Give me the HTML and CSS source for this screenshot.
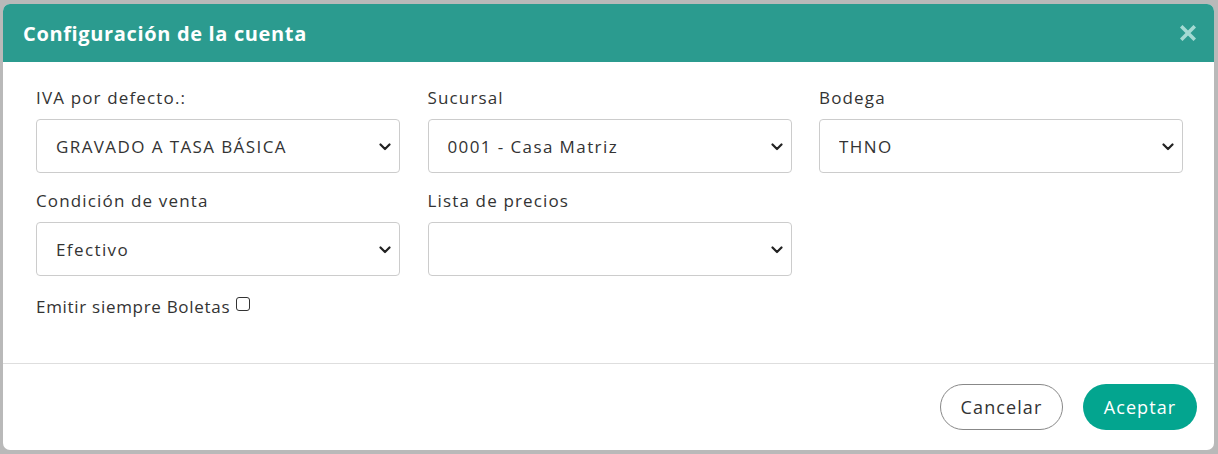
FILE: index.html
```html
<!DOCTYPE html>
<html lang="es">
<head>
<meta charset="utf-8">
<title>Configuración de la cuenta</title>
<link rel="stylesheet" href="styles.css">
</head>
<body>
<div class="backdrop">
  <div class="modal">
    <div class="modal-header">
      <h1 class="modal-title">Configuración de la cuenta</h1>
      <svg class="close" viewBox="0 0 16 16" width="16" height="16"><path d="M2.5 2.5 L13.5 13.5 M13.5 2.5 L2.5 13.5" stroke="#a4dad3" stroke-width="3.6" stroke-linecap="square"/></svg>
    </div>
    <div class="modal-body">
      <div class="grid">
        <div class="field">
          <label class="label">IVA por defecto.:</label>
          <div class="select-wrap">
            <select class="select"><option>GRAVADO A TASA BÁSICA</option></select>
            <svg class="chev" viewBox="0 0 12 8" width="12" height="8"><path d="M1.5 1.5 L6 6 L10.5 1.5" fill="none" stroke="#222" stroke-width="2.2" stroke-linecap="round" stroke-linejoin="round"/></svg>
          </div>
        </div>
        <div class="field">
          <label class="label">Sucursal</label>
          <div class="select-wrap">
            <select class="select"><option>0001 - Casa Matriz</option></select>
            <svg class="chev" viewBox="0 0 12 8" width="12" height="8"><path d="M1.5 1.5 L6 6 L10.5 1.5" fill="none" stroke="#222" stroke-width="2.2" stroke-linecap="round" stroke-linejoin="round"/></svg>
          </div>
        </div>
        <div class="field">
          <label class="label">Bodega</label>
          <div class="select-wrap">
            <select class="select"><option>THNO</option></select>
            <svg class="chev" viewBox="0 0 12 8" width="12" height="8"><path d="M1.5 1.5 L6 6 L10.5 1.5" fill="none" stroke="#222" stroke-width="2.2" stroke-linecap="round" stroke-linejoin="round"/></svg>
          </div>
        </div>
        <div class="field">
          <label class="label">Condición de venta</label>
          <div class="select-wrap">
            <select class="select"><option>Efectivo</option></select>
            <svg class="chev" viewBox="0 0 12 8" width="12" height="8"><path d="M1.5 1.5 L6 6 L10.5 1.5" fill="none" stroke="#222" stroke-width="2.2" stroke-linecap="round" stroke-linejoin="round"/></svg>
          </div>
        </div>
        <div class="field">
          <label class="label">Lista de precios</label>
          <div class="select-wrap">
            <select class="select"><option></option></select>
            <svg class="chev" viewBox="0 0 12 8" width="12" height="8"><path d="M1.5 1.5 L6 6 L10.5 1.5" fill="none" stroke="#222" stroke-width="2.2" stroke-linecap="round" stroke-linejoin="round"/></svg>
          </div>
        </div>
      </div>
      <div class="check-row">
        <span class="label-inline">Emitir siempre Boletas</span>
        <input type="checkbox" class="checkbox">
      </div>
    </div>
    <div class="modal-footer">
      <button class="btn btn-outline">Cancelar</button>
      <button class="btn btn-primary">Aceptar</button>
    </div>
  </div>
</div>
</body>
</html>
```
FILE: styles.css
```css
* { box-sizing: border-box; }
html, body { margin: 0; padding: 0; }
body {
  width: 1218px;
  height: 454px;
  background: #b9b9b9;
  font-family: "Open Sans", "Liberation Sans", sans-serif;
  color: #333;
  overflow: hidden;
}
.backdrop {
  padding: 4px 4px 4px 3px;
}
.modal {
  width: 1211px;
  height: 446px;
  background: #fff;
  border-radius: 7px;
  overflow: hidden;
  display: flex;
  flex-direction: column;
}
.modal-header {
  height: 58px;
  background: #2b9b8f;
  display: flex;
  align-items: center;
  justify-content: space-between;
  padding: 0 18px 0 20px;
}
.modal-title {
  margin: 0;
  color: #fff;
  font-size: 20px;
  font-weight: 700;
  letter-spacing: 0.65px;
}
.close {
  display: block;
}
.modal-body {
  padding: 24px 31px 0 33px;
  flex: 1;
}
.grid {
  display: grid;
  grid-template-columns: repeat(3, 364px);
  column-gap: 27.5px;
  row-gap: 16px;
}
.field {
  display: flex;
  flex-direction: column;
}
.label {
  font-size: 17px;
  line-height: 24px;
  margin-bottom: 9px;
  color: #333;
  letter-spacing: 1.15px;
}
.select-wrap {
  position: relative;
  height: 54px;
}
.select {
  appearance: none;
  -webkit-appearance: none;
  width: 100%;
  height: 54px;
  border: 1px solid #ccc;
  border-radius: 4px;
  background: #fff;
  padding: 0 40px 0 19px;
  font-family: inherit;
  font-size: 17px;
  color: #333;
  letter-spacing: 1.4px;
  outline: none;
}
.chev {
  position: absolute;
  right: 9px;
  top: 24px;
  pointer-events: none;
}
.check-row {
  margin-top: 19px;
  display: flex;
  align-items: center;
  gap: 6px;
  height: 24px;
}
.label-inline {
  font-size: 17px;
  line-height: 24px;
  letter-spacing: 0.7px;
}
.checkbox {
  appearance: none;
  -webkit-appearance: none;
  width: 14px;
  height: 14px;
  margin: -6px 0 0 0;
  border: 1px solid #333;
  border-radius: 3px;
  background: #fff;
}
.modal-footer {
  border-top: 1px solid #dedede;
  height: 87px;
  display: flex;
  justify-content: flex-end;
  align-items: center;
  gap: 20px;
  padding: 0 17px 0 0;
}
.btn {
  height: 46px;
  border-radius: 23px;
  font-family: inherit;
  font-size: 18px;
  padding: 0;
  letter-spacing: 1.1px;
}
.btn-outline {
  width: 123px;
  background: #fff;
  border: 1px solid #888;
  color: #333;
}
.btn-primary {
  width: 114px;
  background: #03a58f;
  border: none;
  color: #fff;
  font-weight: 500;
}
```
